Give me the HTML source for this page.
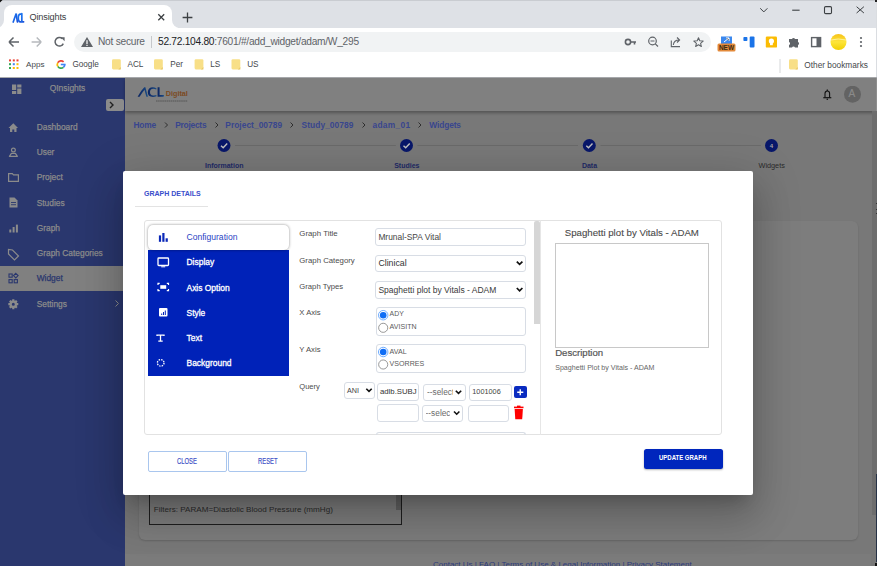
<!DOCTYPE html>
<html><head><meta charset="utf-8">
<style>
*{box-sizing:border-box;margin:0;padding:0}
html,body{width:877px;height:566px;overflow:hidden;background:#fff;font-family:"Liberation Sans",sans-serif}
.a{position:absolute}
.t{position:absolute;white-space:nowrap;line-height:1}
</style></head><body>
<!-- ============ CHROME ============ -->
<div class="a" style="left:0;top:0;width:877px;height:28px;background:#dee1e6"></div>
<div class="a" style="left:0;top:0;width:877px;height:1px;background:#c9ccd1"></div>
<svg class="a" style="left:0;top:0" width="4" height="4"><path d="M0 0 H2.5 L0 2.5 Z" fill="#111"/></svg>
<!-- active tab -->
<div class="a" style="left:4px;top:5px;width:168px;height:24px;background:#fff;border-radius:8px 8px 0 0"></div>
<div class="a" style="left:0;top:20px;width:4px;height:8px;background:#fff"></div>
<div class="a" style="left:-4px;top:12px;width:8px;height:16px;background:#dee1e6;border-radius:0 0 8px 0"></div>
<div class="a" style="left:172px;top:20px;width:6px;height:8px;background:#fff"></div>
<div class="a" style="left:172px;top:12px;width:12px;height:16px;background:#dee1e6;border-radius:0 0 0 8px"></div>
<svg class="a" style="left:12px;top:12px" width="13" height="12"><defs><linearGradient id="fvg" x1="0" y1="0" x2="1" y2="1"><stop offset="0" stop-color="#1877f2"/><stop offset="1" stop-color="#1a4fd8"/></linearGradient></defs><g fill="none" stroke="url(#fvg)" stroke-width="1.7" stroke-linecap="round"><path d="M1.2 10 L4.2 1.5 L5.4 10"/><path d="M8.6 2.2 Q6.3 2 6.3 6 Q6.3 10 8.6 9.8"/><path d="M9.8 1.5 V9.8 H11.6"/></g></svg>
<div class="t" style="left:29.5px;top:13px;font-size:9.2px;color:#3c4043;letter-spacing:-0.18px">Qinsights</div>
<svg class="a" style="left:157px;top:13px" width="9" height="9"><path d="M1.3 1.3 L7.2 7.2 M7.2 1.3 L1.3 7.2" stroke="#3c4043" stroke-width="1.3"/></svg>
<svg class="a" style="left:182px;top:12px" width="11" height="11"><path d="M5.5 0.6 V10.4 M0.6 5.5 H10.4" stroke="#3c4043" stroke-width="1.3"/></svg>
<!-- window controls -->
<svg class="a" style="left:0;top:0" width="877" height="28">
 <path d="M760.2 8.3 L763.8 11.9 L767.4 8.3" fill="none" stroke="#3c4043" stroke-width="1"/>
 <path d="M792.2 10.2 H799.6" stroke="#3c4043" stroke-width="1.1"/>
 <rect x="824.5" y="6.6" width="7" height="7" rx="1.2" fill="none" stroke="#3c4043" stroke-width="1.1"/>
 <path d="M856.6 6.7 L863.9 13 M863.9 6.7 L856.6 13" stroke="#3c4043" stroke-width="1"/>
</svg>
<!-- toolbar -->
<svg class="a" style="left:0;top:28px" width="877" height="28">
 <path d="M9 14 H19 M9 14 L13.5 9.5 M9 14 L13.5 18.5" fill="none" stroke="#5f6368" stroke-width="1.5"/>
 <path d="M41.2 14 H31.6 M41.2 14 L36.7 9.5 M41.2 14 L36.7 18.5" fill="none" stroke="#b6b9bd" stroke-width="1.5"/>
 <path d="M62.3 10.6 A4.3 4.3 0 1 0 63.3 15.6" fill="none" stroke="#5f6368" stroke-width="1.5"/>
 <path d="M60.6 9.3 L64.6 9.3 L64.6 13.3 Z" fill="#5f6368"/>
</svg>
<div class="a" style="left:74px;top:32px;width:637px;height:20px;background:#f1f3f4;border-radius:10px"></div>
<svg class="a" style="left:80px;top:36px" width="14" height="12"><path d="M7 1 L13 11 H1 Z" fill="#5f6368"/><rect x="6.4" y="4.2" width="1.2" height="3.8" fill="#fff"/><rect x="6.4" y="8.8" width="1.2" height="1.2" fill="#fff"/></svg>
<div class="t" style="left:98px;top:37px;font-size:10.2px;color:#5f6368;letter-spacing:-0.25px">Not secure</div>
<div class="a" style="left:151px;top:36px;width:1px;height:12px;background:#c6c8cb"></div>
<div class="t" style="left:158px;top:37.3px;font-size:10.2px;color:#202124;letter-spacing:-0.27px">52.72.104.80<span style="color:#5f6368">:7601/#/add_widget/adam/W_295</span></div>
<svg class="a" style="left:600px;top:28px" width="277" height="28">
 <!-- key -->
 <circle cx="28" cy="14" r="2.6" fill="none" stroke="#5f6368" stroke-width="1.6"/>
 <path d="M30.5 14 H36 M34.5 14 V16.5" stroke="#5f6368" stroke-width="1.6"/>
 <!-- zoom -->
 <circle cx="52.5" cy="13" r="3.8" fill="none" stroke="#5f6368" stroke-width="1.2"/>
 <path d="M55.3 15.8 L58 18.5 M50.5 13 H54.5" stroke="#5f6368" stroke-width="1.2"/>
 <!-- share -->
 <path d="M71.3 12.5 V18.6 H80" fill="none" stroke="#5f6368" stroke-width="1.1"/>
 <path d="M73.3 17 Q74 12 79 12 M77 9.5 L79.6 12 L77 14.5" fill="none" stroke="#5f6368" stroke-width="1.1"/>
 <!-- star -->
 <path d="M98.50 9.70 L99.79 12.82 L103.16 13.09 L100.59 15.28 L101.38 18.56 L98.50 16.80 L95.62 18.56 L96.41 15.28 L93.84 13.09 L97.21 12.82 Z" fill="none" stroke="#5f6368" stroke-width="1.05" stroke-linejoin="round"/>
 <!-- NEW extension -->
 <rect x="121" y="8.5" width="11" height="8" fill="#3b88ee"/>
 <path d="M124 14 L129 10 M126 10 H129 V13" stroke="#fff" stroke-width="1"/>
 <rect x="117.5" y="15.5" width="18" height="8" rx="1.5" fill="#e38a3a"/>
 <text x="126.5" y="22" font-family="Liberation Sans" font-size="6.5" font-weight="700" fill="#3a2a14" text-anchor="middle">NEW</text>
 <!-- trello-ish -->
 <rect x="143.4" y="9" width="4" height="4" rx="0.8" fill="#1a73e8"/>
 <rect x="149.7" y="8.6" width="4.8" height="11" rx="1" fill="#1a73e8"/>
 <!-- keep -->
 <rect x="165.8" y="8.6" width="11.2" height="11" rx="1.2" fill="#fbbc04"/>
 <circle cx="171.4" cy="13" r="2.6" fill="#fff"/>
 <rect x="170" y="15" width="2.8" height="2.2" fill="#fff"/>
 <!-- puzzle -->
 <path d="M189 11 H192 A1.6 1.6 0 0 1 195 11 H198 V14 A1.6 1.6 0 0 1 198 17 V19.5 H195 A1.6 1.6 0 0 0 192 19.5 H189 V17 A1.6 1.6 0 0 0 189 14 Z" fill="#5f6368"/>
 <!-- sidebar -->
 <rect x="211.6" y="9.6" width="9" height="9" fill="none" stroke="#5f6368" stroke-width="1.4"/>
 <rect x="216.5" y="9.6" width="4" height="9" fill="#5f6368"/>
 <!-- avatar -->
 <defs><linearGradient id="yg" x1="0" y1="0" x2="0" y2="1"><stop offset="0" stop-color="#f7c21a"/><stop offset="0.5" stop-color="#fde53a"/><stop offset="1" stop-color="#f2d000"/></linearGradient></defs>
 <circle cx="238.5" cy="14" r="8" fill="url(#yg)"/>
 <path d="M231 12 Q238 10 246 12" stroke="#fff6b0" stroke-width="0.8" fill="none"/>
 <!-- menu -->
 <circle cx="261" cy="10" r="1.1" fill="#5f6368"/><circle cx="261" cy="14" r="1.1" fill="#5f6368"/><circle cx="261" cy="18" r="1.1" fill="#5f6368"/>
</svg>
<div class="a" style="left:875.5px;top:1px;width:1.5px;height:76px;background:#dadde1"></div><div class="a" style="left:875px;top:0;width:2px;height:2px;background:#222"></div>
<!-- bookmarks -->
<svg class="a" style="left:0;top:56px" width="877" height="21">
 <g>
  <rect x="9" y="3.4" width="2" height="2" fill="#ea4335"/><rect x="12.8" y="3.4" width="2" height="2" fill="#ea4335"/><rect x="16.5" y="3.4" width="2" height="2" fill="#ea4335"/>
  <rect x="9" y="7.2" width="2" height="2" fill="#34a853"/><rect x="12.8" y="7.2" width="2" height="2" fill="#4285f4"/><rect x="16.5" y="7.2" width="2" height="2" fill="#fbbc04"/>
  <rect x="9" y="11" width="2" height="2" fill="#34a853"/><rect x="12.8" y="11" width="2" height="2" fill="#fbbc04"/><rect x="16.5" y="11" width="2" height="2" fill="#fbbc04"/>
 </g>
 <!-- google G -->
 <path d="M64.70 8.50 A3.7 3.7 0 0 1 63.38 11.33" fill="none" stroke="#4285f4" stroke-width="1.7"/>
 <path d="M63.38 11.33 A3.7 3.7 0 0 1 57.80 10.35" fill="none" stroke="#34a853" stroke-width="1.7"/>
 <path d="M57.80 10.35 A3.7 3.7 0 0 1 57.80 6.65" fill="none" stroke="#fbbc04" stroke-width="1.7"/>
 <path d="M57.80 6.65 A3.7 3.7 0 0 1 63.62 5.88" fill="none" stroke="#ea4335" stroke-width="1.7"/>
 <path d="M60.8 8.5 H65.55" stroke="#4285f4" stroke-width="1.6"/>
 <!-- folders -->
 <rect x="112" y="3.2" width="8.8" height="10.2" rx="1.3" fill="#f8df87"/><path d="M118.3 13.4 L120.8 10.9 V13.4 Z" fill="#e9c96a"/>
 <rect x="154" y="3.2" width="8.8" height="10.2" rx="1.3" fill="#f8df87"/><path d="M160.3 13.4 L162.8 10.9 V13.4 Z" fill="#e9c96a"/>
 <rect x="194.6" y="3.2" width="8.8" height="10.2" rx="1.3" fill="#f8df87"/><path d="M200.9 13.4 L203.4 10.9 V13.4 Z" fill="#e9c96a"/>
 <rect x="231.5" y="3.2" width="8.8" height="10.2" rx="1.3" fill="#f8df87"/><path d="M237.8 13.4 L240.3 10.9 V13.4 Z" fill="#e9c96a"/>
 <rect x="779.5" y="3" width="1" height="14" fill="#d6d8da"/>
 <rect x="789" y="3.2" width="8.8" height="10.2" rx="1.3" fill="#f8df87"/><path d="M795.3 13.4 L797.8 10.9 V13.4 Z" fill="#e9c96a"/>
</svg>
<div class="t" style="left:26px;top:61px;font-size:8.1px;color:#45484c">Apps</div>
<div class="t" style="left:72.4px;top:61px;font-size:8.2px;color:#45484c">Google</div>
<div class="t" style="left:127.5px;top:61px;font-size:8.2px;color:#45484c">ACL</div>
<div class="t" style="left:170.3px;top:61px;font-size:8.2px;color:#45484c">Per</div>
<div class="t" style="left:210.3px;top:61px;font-size:8.2px;color:#45484c">LS</div>
<div class="t" style="left:247.2px;top:61px;font-size:8.2px;color:#45484c">US</div>
<div class="t" style="left:804.3px;top:61px;font-size:8.3px;color:#45484c">Other bookmarks</div>
<div class="a" style="left:0;top:77px;width:877px;height:1px;background:#a9abae"></div>

<!-- ============ PAGE (dimmed) ============ -->
<div class="a" style="left:0;top:78px;width:877px;height:488px;background:#787878"></div>
<!-- sidebar -->
<div class="a" style="left:0;top:78px;width:125px;height:488px;background:#2a376e"></div>
<div class="a" style="left:0;top:266px;width:125px;height:25px;background:#808080"></div>
<!-- header -->
<div class="a" style="left:125px;top:78px;width:752px;height:33px;background:#808080;box-shadow:0 2px 3px rgba(0,0,0,.3)"></div>
<div class="a" style="left:875.7px;top:78px;width:1.3px;height:33px;background:#8e8e8e"></div>
<!-- page scrollbar -->
<div class="a" style="left:871.5px;top:111px;width:5.5px;height:404px;background:#6d6d6d"></div>
<div class="a" style="left:875.8px;top:474px;width:1.2px;height:88px;background:#263246"></div><div class="a" style="left:875px;top:563px;width:2px;height:3px;background:#111"></div>
<div class="a" style="left:875.5px;top:202.5px;width:1.5px;height:1.6px;background:#333"></div><div class="a" style="left:875.5px;top:208.8px;width:1.5px;height:1.6px;background:#333"></div><div class="a" style="left:875.5px;top:212.6px;width:1.5px;height:1.6px;background:#333"></div>
<!-- card -->
<div class="a" style="left:138.6px;top:221.3px;width:719.6px;height:318.6px;background:#7d7d7d;border-radius:6px;box-shadow:0 1px 2px rgba(0,0,0,.15)"></div>
<div class="a" style="left:149px;top:430px;width:253px;height:95px;border:1px solid #1e1e1e"></div>
<div class="a" style="left:396.3px;top:480px;width:4.4px;height:30px;background:#626262"></div>
<div class="t" style="left:153.8px;top:506px;font-size:8.1px;color:#2b2b2b">Filters: PARAM=Diastolic Blood Pressure (mmHg)</div>
<!-- footer band -->
<div class="a" style="left:125px;top:554px;width:746px;height:12px;background:#7b7b7b"></div>
<div class="t" style="left:433px;top:560.5px;font-size:8px;color:#2c3a7c">Contact Us | FAQ | Terms of Use &amp; Legal Information | Privacy Statement</div>


<!-- sidebar content -->
<svg class="a" style="left:0;top:78px" width="125" height="240">
 <g fill="#8b8b8b">
  <rect x="12" y="6.5" width="4.2" height="5.5"/><rect x="17.2" y="6.5" width="4.2" height="3"/><rect x="12" y="13" width="4.2" height="3"/><rect x="17.2" y="10.5" width="4.2" height="5.5"/>
 </g>
 <rect x="106" y="21" width="18" height="12" rx="2" fill="#8b8b8b"/>
 <path d="M110 24 L113 27 L110 30" fill="none" stroke="#222" stroke-width="1.4"/>
 <!-- home -->
 <path d="M8.5 50 L13.3 45.2 L18 50 H16.5 V54 H14.3 V51.5 H12.3 V54 H10 V50 Z" fill="#8b8b8b"/>
 <!-- user -->
 <circle cx="13.4" cy="72" r="1.9" fill="none" stroke="#8b8b8b" stroke-width="1.2"/>
 <path d="M9.4 78.3 L11.4 75.4 H15.4 L17.4 78.3 Z" fill="none" stroke="#8b8b8b" stroke-width="1.2" stroke-linejoin="round"/>
 <!-- folder -->
 <path d="M8.6 95.6 H12.3 L13.5 96.9 H18.4 V103.3 H8.6 Z" fill="none" stroke="#8b8b8b" stroke-width="1.2"/>
 <!-- file -->
 <path d="M9.5 119.5 H14.5 L17.5 122.5 V129.5 H9.5 Z" fill="#8b8b8b"/>
 <rect x="11" y="124" width="5" height="0.9" fill="#2a376e"/><rect x="11" y="126.3" width="5" height="0.9" fill="#2a376e"/>
 <!-- graph -->
 <rect x="9.3" y="151.5" width="2" height="3" fill="#8b8b8b"/><rect x="12.6" y="149" width="2" height="5.5" fill="#8b8b8b"/><rect x="15.9" y="146.6" width="2" height="7.9" fill="#8b8b8b"/>
 <!-- tag -->
 <path d="M8.5 172 V176.5 L14.5 182.5 L18.5 178.5 L12.5 172.5 Z" fill="none" stroke="#8b8b8b" stroke-width="1.2" transform="translate(0,-0.5)"/>
 <!-- widget -->
 <g fill="none" stroke="#2a376e" stroke-width="1.1">
  <rect x="9" y="196" width="3.2" height="3.2"/><path d="M15.8 195.3 L18.1 197.6 L15.8 199.9 L13.5 197.6 Z"/><rect x="9" y="201.6" width="3.2" height="3.2"/><rect x="14.2" y="201.6" width="3.2" height="3.2"/>
 </g>
 <!-- gear -->
 <path d="M17.04 225.09 L18.28 225.10 L18.28 227.30 L17.04 227.31 L16.73 228.06 L17.60 228.94 L16.04 230.50 L15.16 229.63 L14.41 229.94 L14.40 231.18 L12.20 231.18 L12.19 229.94 L11.44 229.63 L10.56 230.50 L9.00 228.94 L9.87 228.06 L9.56 227.31 L8.32 227.30 L8.32 225.10 L9.56 225.09 L9.87 224.34 L9.00 223.46 L10.56 221.90 L11.44 222.77 L12.19 222.46 L12.20 221.22 L14.40 221.22 L14.41 222.46 L15.16 222.77 L16.04 221.90 L17.60 223.46 L16.73 224.34 Z M14.8 226.2 A1.5 1.5 0 1 0 11.8 226.2 A1.5 1.5 0 1 0 14.8 226.2 Z" fill="#8b8b8b" fill-rule="evenodd"/>
 <path d="M115.5 222.5 L118.5 225.5 L115.5 228.5" fill="none" stroke="#8b8b8b" stroke-width="1"/>
</svg>
<div class="t" style="left:49.7px;top:84px;font-size:8.45px;-webkit-text-stroke:0.25px #8b8b8b;color:#8b8b8b">QInsights</div>
<div class="t" style="left:36.7px;top:123.2px;font-size:8.4px;-webkit-text-stroke:0.25px #8b8b8b;color:#8b8b8b">Dashboard</div>
<div class="t" style="left:36.7px;top:148.3px;font-size:8.4px;-webkit-text-stroke:0.25px #8b8b8b;color:#8b8b8b">User</div>
<div class="t" style="left:36.7px;top:173.4px;font-size:8.4px;-webkit-text-stroke:0.25px #8b8b8b;color:#8b8b8b">Project</div>
<div class="t" style="left:36.7px;top:198.6px;font-size:8.4px;-webkit-text-stroke:0.25px #8b8b8b;color:#8b8b8b">Studies</div>
<div class="t" style="left:36.7px;top:224px;font-size:8.4px;-webkit-text-stroke:0.25px #8b8b8b;color:#8b8b8b">Graph</div>
<div class="t" style="left:36.7px;top:249.1px;font-size:8.4px;-webkit-text-stroke:0.25px #8b8b8b;color:#8b8b8b">Graph Categories</div>
<div class="t" style="left:36.7px;top:274.3px;font-size:8.4px;-webkit-text-stroke:0.25px #2a376e;color:#2a376e">Widget</div>
<div class="t" style="left:36.7px;top:299.5px;font-size:8.4px;-webkit-text-stroke:0.25px #8b8b8b;color:#8b8b8b">Settings</div>
<!-- header content -->
<svg class="a" style="left:133px;top:83px" width="60" height="22">
 <defs><linearGradient id="aclg" x1="0" y1="0" x2="1" y2="0"><stop offset="0" stop-color="#0c2460"/><stop offset="0.6" stop-color="#143a76"/><stop offset="1" stop-color="#1b5088"/></linearGradient></defs>
 <path d="M4.6 13.8 Q7.5 8 11.3 4.3 L12.4 4.3 Q13.6 9 15 13.8 L13.4 13.8 Q12.3 10 11.5 6.8 Q8.6 10.5 6.6 13.8 Z" fill="url(#aclg)"/>
 <path d="M23.5 5.2 Q21.5 4.3 19.8 4.3 Q15.2 4.5 14.8 9 Q14.6 13.9 20 13.9 Q22 13.9 23.6 13.3 L23.4 12 Q21.8 12.5 20.3 12.4 Q16.9 12.3 17 9 Q17.2 5.9 20.2 5.8 Q21.8 5.8 23.2 6.5 Z" fill="url(#aclg)"/>
 <path d="M24.6 4.3 H26.6 V12.1 H31 L30.6 13.8 H24.6 Z" fill="url(#aclg)"/>
 <text x="32.8" y="13.3" font-family="Liberation Sans" font-size="7.6" font-weight="700" fill="#7c4a22" textLength="22" lengthAdjust="spacingAndGlyphs">Digital</text>
 <path d="M23 18 H54.7" stroke="#4a4a4a" stroke-width="0.8" stroke-dasharray="1.6 0.5"/>
</svg>


<svg class="a" style="left:818px;top:86px" width="50" height="20">
 <path d="M7 11.4 V7.6 A2.3 2.6 0 0 1 11.6 7.6 V11.4" fill="none" stroke="#111" stroke-width="1.1"/>
 <path d="M5.3 11.7 H13.3" stroke="#111" stroke-width="1.2"/>
 <path d="M9.3 3.6 V5" stroke="#111" stroke-width="1.2"/>
 <circle cx="9.3" cy="13.2" r="0.8" fill="#111"/>
 <circle cx="34.5" cy="8.3" r="8.5" fill="#636363"/>
</svg>
<div class="t" style="left:848.6px;top:89.3px;font-size:10px;color:#8a8a8a;-webkit-text-stroke:0.2px #8a8a8a">A</div>
<!-- breadcrumb -->
<div class="t" style="left:133.4px;top:121.2px;font-size:8.4px;letter-spacing:-0.13px;font-weight:700;color:#38468e">Home</div>
<div class="t" style="left:175.2px;top:121.2px;font-size:8.4px;letter-spacing:-0.24px;font-weight:700;color:#38468e">Projects</div>
<div class="t" style="left:225.3px;top:121.2px;font-size:8.4px;letter-spacing:0.036px;font-weight:700;color:#38468e">Project_00789</div>
<div class="t" style="left:301.6px;top:121.2px;font-size:8.4px;letter-spacing:0.055px;font-weight:700;color:#38468e">Study_00789</div>
<div class="t" style="left:372.5px;top:121.2px;font-size:8.4px;letter-spacing:0.29px;font-weight:700;color:#38468e">adam_01</div>
<div class="t" style="left:429.3px;top:121.2px;font-size:8.4px;letter-spacing:-0.127px;font-weight:700;color:#38468e">Widgets</div>
<svg class="a" style="left:125px;top:111px" width="746" height="60">
 <g fill="none" stroke="#2a2a2a" stroke-width="0.95">
  <path d="M40 11.5 L42.5 14 L40 16.5"/><path d="M90.5 11.5 L93 14 L90.5 16.5"/><path d="M165.5 11.5 L168 14 L165.5 16.5"/><path d="M237.5 11.5 L240 14 L237.5 16.5"/><path d="M293.5 11.5 L296 14 L293.5 16.5"/>
 </g>
 <g stroke="#6a6a6a" stroke-width="1">
  <path d="M110 34.5 H270.8"/><path d="M292.4 34.5 H453"/><path d="M475.5 34.5 H636"/>
 </g>
 <g fill="#08176a">
  <circle cx="99" cy="34.5" r="6.5"/><circle cx="281.5" cy="34.5" r="6.5"/><circle cx="464.3" cy="34.5" r="6.5"/><circle cx="646.5" cy="34.5" r="6.5"/>
 </g>
 <g fill="none" stroke="#c0c0c0" stroke-width="1.4">
  <path d="M96 34.7 L98.2 36.8 L102.2 32.6"/><path d="M278.5 34.7 L280.7 36.8 L284.7 32.6"/><path d="M461.3 34.7 L463.5 36.8 L467.5 32.6"/>
 </g>
</svg>
<div class="t" style="left:769.8px;top:142.5px;font-size:6px;font-weight:700;color:#a8a8a8">4</div>
<div class="t" style="left:174.2px;width:100px;text-align:center;top:162px;font-size:7px;font-weight:700;color:#1f2a66">Information</div>
<div class="t" style="left:356.8px;width:100px;text-align:center;top:162px;font-size:7px;font-weight:700;color:#1f2a66">Studies</div>
<div class="t" style="left:539.5px;width:100px;text-align:center;top:162px;font-size:7px;font-weight:700;color:#1f2a66">Data</div>
<div class="t" style="left:721.7px;width:100px;text-align:center;top:162px;font-size:7.3px;color:#2a2a2a">Widgets</div>

<!-- ============ MODAL ============ -->
<div class="a" style="left:123px;top:171px;width:629.5px;height:323.8px;background:#fff;border-radius:2px;box-shadow:0 11px 15px -7px rgba(0,0,0,.2),0 24px 38px 3px rgba(0,0,0,.14),0 9px 46px 8px rgba(0,0,0,.12)"></div>

<div class="t" style="left:143.5px;top:190px;font-size:7.8px;font-weight:700;color:#3a4ecb;transform:scaleX(0.9);transform-origin:0 0">GRAPH DETAILS</div>
<div class="a" style="left:135px;top:206px;width:73px;height:1px;background:#e3e3e3"></div>
<!-- inner container -->
<div class="a" style="left:144px;top:220px;width:578px;height:215px;border:1px solid #e2e2e2;border-radius:3px"></div>
<!-- blue tabs -->
<div class="a" style="left:148px;top:249.5px;width:140.5px;height:126.5px;background:#0022b8"></div>
<div class="a" style="left:148px;top:224.5px;width:140.5px;height:25px;background:#fff;border-radius:5px;box-shadow:0 0 3px rgba(0,0,0,.45)"></div>
<svg class="a" style="left:148px;top:224px" width="141" height="152">
 <!-- config bars -->
 <g fill="#0a28b8"><rect x="10.9" y="11.4" width="2.2" height="6.4"/><rect x="14.3" y="9" width="2.2" height="8.8"/><rect x="17.6" y="14.3" width="2.2" height="3.5"/></g>
 <!-- display monitor -->
 <rect x="10" y="34" width="10.5" height="7.5" rx="0.8" fill="none" stroke="#fff" stroke-width="1.3"/>
 <rect x="13.2" y="42.3" width="4" height="1" fill="#fff"/>
 <!-- axis option -->
 <g fill="none" stroke="#fff" stroke-width="1.2">
  <path d="M10 61 V59.3 H11.7 M18.8 59.3 H20.5 V61 M20.5 65 V66.7 H18.8 M11.7 66.7 H10 V65"/>
 </g>
 <rect x="12.3" y="61.2" width="5.9" height="3.6" fill="#fff"/>
 <!-- style -->
 <rect x="11" y="84" width="8.5" height="8.5" rx="1" fill="#fff"/>
 <g fill="#0022b8"><rect x="13.2" y="89.5" width="1" height="1.5"/><rect x="15" y="88" width="1" height="3"/><rect x="16.8" y="86.5" width="1" height="4.5"/></g>
 <!-- text -->
 <path d="M9 111.2 H16 M12.5 111.2 V117.2 M10.3 117.2 H14.7 M9 110.6 V112 M16 110.6 V112" fill="none" stroke="#fff" stroke-width="1.3"/>
 <!-- background dashed circle -->
 <circle cx="12.7" cy="138.9" r="3.3" fill="none" stroke="#fff" stroke-width="1.3" stroke-dasharray="1.5 1.1"/>
</svg>
<div class="t" style="left:186.5px;top:233px;font-size:8.57px;color:#2a44c4">Configuration</div>
<div class="t" style="left:186.5px;top:258.3px;font-size:8.45px;-webkit-text-stroke:0.3px #fff;color:#fff">Display</div>
<div class="t" style="left:186.5px;top:283.5px;font-size:8.45px;-webkit-text-stroke:0.3px #fff;color:#fff">Axis Option</div>
<div class="t" style="left:186.5px;top:308.8px;font-size:8.45px;-webkit-text-stroke:0.3px #fff;color:#fff">Style</div>
<div class="t" style="left:186.5px;top:333.7px;font-size:8.45px;-webkit-text-stroke:0.3px #fff;color:#fff">Text</div>
<div class="t" style="left:186.5px;top:358.9px;font-size:8.45px;-webkit-text-stroke:0.3px #fff;color:#fff">Background</div>
<!-- form labels -->
<div class="t" style="left:299.3px;top:230px;font-size:7.85px;color:#4c4c4c">Graph Title</div>
<div class="t" style="left:299.3px;top:256.5px;font-size:7.8px;color:#4c4c4c">Graph Category</div>
<div class="t" style="left:299.3px;top:282.5px;font-size:7.7px;color:#4c4c4c">Graph Types</div>
<div class="t" style="left:299.3px;top:309px;font-size:7.7px;color:#4c4c4c">X Axis</div>
<div class="t" style="left:299.3px;top:346px;font-size:7.7px;color:#4c4c4c">Y Axis</div>
<div class="t" style="left:299.3px;top:383px;font-size:7.55px;color:#4c4c4c">Query</div>
<!-- inputs -->
<div class="a" style="left:375px;top:228px;width:151px;height:18px;border:1px solid #d8dde5;border-radius:3px"></div>
<div class="t" style="left:378.4px;top:232.5px;font-size:8.38px;color:#454545">Mrunal-SPA Vital</div>
<div class="a" style="left:375px;top:254.5px;width:151px;height:17.5px;border:1px solid #d8dde5;border-radius:3px"></div>
<div class="t" style="left:378.4px;top:259px;font-size:8.75px;color:#333">Clinical</div>
<div class="a" style="left:375px;top:281px;width:151px;height:17.5px;border:1px solid #d8dde5;border-radius:3px"></div>
<div class="t" style="left:378.4px;top:285.5px;font-size:8.5px;color:#3a3a3a">Spaghetti plot by Vitals - ADAM</div>
<svg class="a" style="left:510px;top:254px" width="20" height="46">
 <path d="M6.8 7.6 L9.6 10.4 L12.4 7.6" fill="none" stroke="#111" stroke-width="1.7"/>
 <path d="M6.8 34 L9.6 36.8 L12.4 34" fill="none" stroke="#111" stroke-width="1.7"/>
</svg>
<!-- radio boxes -->
<div class="a" style="left:375.5px;top:307px;width:150.5px;height:29px;border:1px solid #d8dde5;border-radius:3px"></div>
<div class="a" style="left:375.5px;top:344px;width:150.5px;height:28.5px;border:1px solid #d8dde5;border-radius:3px"></div>
<svg class="a" style="left:375px;top:305px" width="20" height="70">
 <circle cx="8.2" cy="10.2" r="4.75" fill="#fff" stroke="#6aaaff" stroke-width="0.95"/>
 <circle cx="8.2" cy="10.2" r="3.3" fill="#0f6df5"/>
 <circle cx="8.2" cy="22.8" r="4.55" fill="none" stroke="#858585" stroke-width="0.85"/>
 <circle cx="8.2" cy="47" r="4.75" fill="#fff" stroke="#6aaaff" stroke-width="0.95"/>
 <circle cx="8.2" cy="47" r="3.3" fill="#0f6df5"/>
 <circle cx="8.2" cy="59.5" r="4.55" fill="none" stroke="#858585" stroke-width="0.85"/>
</svg>
<div class="t" style="left:389.6px;top:310.5px;font-size:6.9px;color:#5a5a5a">ADY</div>
<div class="t" style="left:389.6px;top:324px;font-size:7.08px;color:#5a5a5a">AVISITN</div>
<div class="t" style="left:389.6px;top:348.5px;font-size:7.08px;color:#5a5a5a">AVAL</div>
<div class="t" style="left:389.6px;top:360.5px;font-size:7.08px;color:#5a5a5a">VSORRES</div>
<!-- query -->
<div class="a" style="left:344px;top:381.5px;width:30.5px;height:17px;border:1px solid #d8dde5;border-radius:3px"></div>
<div class="t" style="left:347px;top:386.5px;font-size:7.2px;color:#444">ANI</div>
<div class="a" style="left:376.5px;top:383px;width:42px;height:17.5px;border:1px solid #d8dde5;border-radius:3px"></div>
<div class="t" style="left:380px;top:388px;font-size:7.75px;color:#333">adlb.SUBJ</div>
<div class="a" style="left:423px;top:383.5px;width:42.5px;height:17px;border:1px solid #d8dde5;border-radius:3px"></div>
<div class="t" style="left:427px;top:388px;width:25.5px;overflow:hidden;font-size:8.3px;color:#6a6a6a">--select</div>
<div class="a" style="left:469px;top:383.5px;width:43px;height:17px;border:1px solid #d8dde5;border-radius:3px"></div>
<div class="t" style="left:472.3px;top:388px;font-size:7.3px;color:#444">1001006</div>
<div class="a" style="left:514px;top:385.7px;width:12.5px;height:12.5px;background:#0a2bc0;border-radius:2px"></div>
<svg class="a" style="left:514px;top:385.7px" width="13" height="13"><path d="M6.25 3.2 V9.3 M3.2 6.25 H9.3" stroke="#fff" stroke-width="1.4"/></svg>
<div class="a" style="left:376.5px;top:404px;width:42px;height:17.5px;border:1px solid #d8dde5;border-radius:3px"></div>
<div class="a" style="left:421.5px;top:404.5px;width:41.5px;height:17px;border:1px solid #d8dde5;border-radius:3px"></div>
<div class="t" style="left:425.6px;top:409px;width:24.5px;overflow:hidden;font-size:8.3px;color:#6a6a6a">--select</div>
<div class="a" style="left:467.5px;top:404.5px;width:41.5px;height:17px;border:1px solid #d8dde5;border-radius:3px"></div>
<svg class="a" style="left:344px;top:381px" width="140" height="45">
 <path d="M22.3 7.7 L25 10.4 L27.7 7.7" fill="none" stroke="#111" stroke-width="1.6"/>
 <path d="M111.8 9.7 L114.5 12.4 L117.2 9.7" fill="none" stroke="#111" stroke-width="1.6"/>
 <path d="M110 30.5 L112.7 33.2 L115.4 30.5" fill="none" stroke="#111" stroke-width="1.6"/>
</svg>
<svg class="a" style="left:512px;top:405px" width="14" height="16">
 <rect x="2" y="1.6" width="9.5" height="1.6" fill="#f00"/><rect x="5" y="0.6" width="3.5" height="1.5" fill="#f00"/>
 <path d="M2.6 4 H10.9 L10.2 14.2 H3.3 Z" fill="#f00"/>
</svg>
<div class="a" style="left:376px;top:432px;width:150px;height:3px;border:1px solid #d8dde5;border-bottom:none;border-radius:3px 3px 0 0"></div>
<!-- form scrollbar -->
<div class="a" style="left:534px;top:220.5px;width:5.5px;height:103px;background:#d6d6d6;border-radius:2px 2px 0 0"></div>
<div class="a" style="left:539.5px;top:220px;width:1px;height:215px;background:#e6e6e6"></div>
<!-- preview -->
<div class="t" style="left:564.7px;top:227.8px;font-size:9.68px;color:#4a4a4a;-webkit-text-stroke:0.1px #4a4a4a">Spaghetti plot by Vitals - ADAM</div>
<div class="a" style="left:555px;top:243px;width:154px;height:104.5px;border:1px solid #c8c8c8"></div>
<div class="t" style="left:555.2px;top:348px;font-size:9.6px;-webkit-text-stroke:0.2px #555;color:#555">Description</div>
<div class="t" style="left:555.2px;top:364.5px;font-size:7.1px;color:#666">Spaghetti Plot by Vitals - ADAM</div>
<!-- buttons -->
<div class="a" style="left:148px;top:451px;width:79px;height:21px;border:1px solid #a9c6ee;border-radius:2px"></div>
<div class="a" style="left:228.3px;top:451px;width:79px;height:21px;border:1px solid #a9c6ee;border-radius:2px"></div>
<div class="t" style="left:177px;top:456.9px;font-size:8.4px;color:#3a4dc5;transform:scaleX(0.7);transform-origin:0 0;-webkit-text-stroke:0.15px #3a4dc5">CLOSE</div>
<div class="t" style="left:257.5px;top:456.9px;font-size:8.4px;color:#3a4dc5;transform:scaleX(0.7);transform-origin:0 0;-webkit-text-stroke:0.15px #3a4dc5">RESET</div>
<div class="a" style="left:644px;top:448.5px;width:78.5px;height:20px;background:#0026bd;border-radius:2.5px;box-shadow:0 1px 2px rgba(0,0,0,.3)"></div>
<div class="t" style="left:659px;top:454.4px;font-size:7.4px;font-weight:700;color:#fff;transform:scaleX(0.81);transform-origin:0 0">UPDATE GRAPH</div>

</body></html>
